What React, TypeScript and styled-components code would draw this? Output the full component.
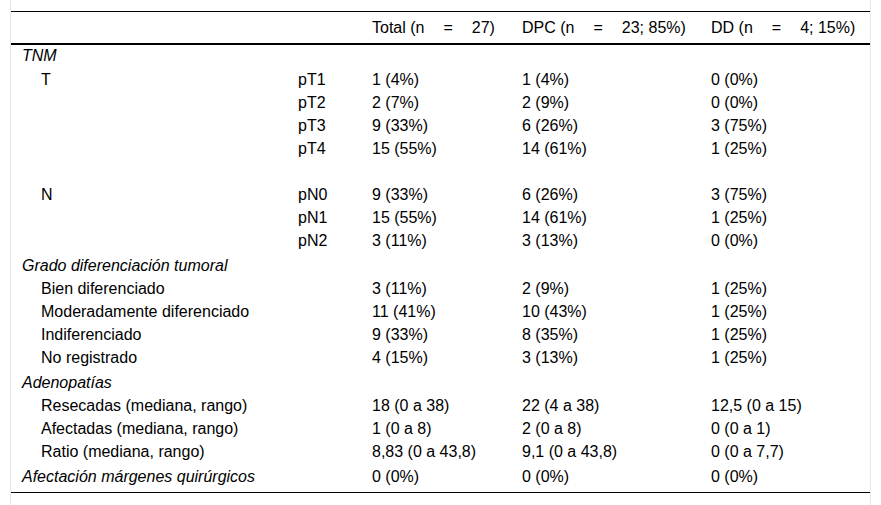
import React from "react";
import styled, { createGlobalStyle, css } from "styled-components";

const Global = createGlobalStyle`
  html, body { margin: 0; padding: 0; background: #fff; }
  body { font-family: "Liberation Sans", Arial, sans-serif; color: #000; }
`;

const Frame = styled.div`
  box-sizing: border-box;
  width: 861px;
  height: 505px;
  margin-left: 10px;
  padding-top: 11px;
  border-left: 1px solid #e8e8e8;
  border-right: 1px solid #e8e8e8;
`;

const Table = styled.table`
  width: 859px;
  table-layout: fixed;
  border-collapse: separate;
  border-spacing: 0;
  font-size: 16px;
  line-height: 19px;
`;

const Col = styled.col<{ $w: number }>`
  width: ${(p) => p.$w}px;
`;

const HeadCell = styled.th`
  text-align: left;
  font-weight: normal;
  padding: 6px 11px;
  border-top: 1px solid #000;
  border-bottom: 2px solid #000;
  white-space: nowrap;
`;

const HeadLabel = styled.span`
  display: inline-flex;
  gap: 19px;
`;

type Pos = "first" | "section" | "plain";

const Cell = styled.td<{ $pos: Pos; $last?: boolean }>`
  height: 19px;
  padding: ${(p) =>
    p.$pos === "first" ? "1px 11px 3px" : p.$pos === "section" ? "4px 11px 2px" : "2px 11px"};
  white-space: nowrap;
  vertical-align: middle;
  font-style: normal;
  ${(p) =>
    p.$last &&
    css`
      padding-bottom: 6px;
      border-bottom: 1px solid #000;
    `}
`;

const LabelCell = styled(Cell)<{ $italic?: boolean; $indent?: boolean }>`
  padding-left: ${(p) => (p.$indent ? "30px" : "11px")};
  font-style: ${(p) => (p.$italic ? "italic" : "normal")};
`;

type Row = { label?: string; sub?: string; vals?: [string, string, string]; section?: boolean };

const rows: Row[] = [
  { label: "TNM", section: true },
  { label: "T", sub: "pT1", vals: ["1 (4%)", "1 (4%)", "0 (0%)"] },
  { sub: "pT2", vals: ["2 (7%)", "2 (9%)", "0 (0%)"] },
  { sub: "pT3", vals: ["9 (33%)", "6 (26%)", "3 (75%)"] },
  { sub: "pT4", vals: ["15 (55%)", "14 (61%)", "1 (25%)"] },
  {},
  { label: "N", sub: "pN0", vals: ["9 (33%)", "6 (26%)", "3 (75%)"] },
  { sub: "pN1", vals: ["15 (55%)", "14 (61%)", "1 (25%)"] },
  { sub: "pN2", vals: ["3 (11%)", "3 (13%)", "0 (0%)"] },
  { label: "Grado diferenciación tumoral", section: true },
  { label: "Bien diferenciado", vals: ["3 (11%)", "2 (9%)", "1 (25%)"] },
  { label: "Moderadamente diferenciado", vals: ["11 (41%)", "10 (43%)", "1 (25%)"] },
  { label: "Indiferenciado", vals: ["9 (33%)", "8 (35%)", "1 (25%)"] },
  { label: "No registrado", vals: ["4 (15%)", "3 (13%)", "1 (25%)"] },
  { label: "Adenopatías", section: true },
  { label: "Resecadas (mediana, rango)", vals: ["18 (0 a 38)", "22 (4 a 38)", "12,5 (0 a 15)"] },
  { label: "Afectadas (mediana, rango)", vals: ["1 (0 a 8)", "2 (0 a 8)", "0 (0 a 1)"] },
  { label: "Ratio (mediana, rango)", vals: ["8,83 (0 a 43,8)", "9,1 (0 a 43,8)", "0 (0 a 7,7)"] },
  { label: "Afectación márgenes quirúrgicos", section: true, vals: ["0 (0%)", "0 (0%)", "0 (0%)"] },
];

const headers: [string, string][] = [
  ["Total (n", "27)"],
  ["DPC (n", "23; 85%)"],
  ["DD (n", "4; 15%)"],
];

const widths = [276, 74, 150, 189, 170];

export default function App() {
  return (
    <>
      <Global />
      <Frame>
        <Table>
          <colgroup>
            {widths.map((w, i) => (
              <Col key={i} $w={w} />
            ))}
          </colgroup>
          <thead>
            <tr>
              <HeadCell />
              <HeadCell />
              {headers.map(([a, b]) => (
                <HeadCell key={a}>
                  <HeadLabel>
                    <span>{a}</span>
                    <span>=</span>
                    <span>{b}</span>
                  </HeadLabel>
                </HeadCell>
              ))}
            </tr>
          </thead>
          <tbody>
            {rows.map((r, i) => {
              const pos: Pos = i === 0 ? "first" : r.section ? "section" : "plain";
              const last = i === rows.length - 1;
              return (
                <tr key={i}>
                  <LabelCell $pos={pos} $last={last} $italic={r.section} $indent={!r.section && !!r.label}>
                    {r.label ?? ""}
                  </LabelCell>
                  <Cell $pos={pos} $last={last}>{r.sub ?? ""}</Cell>
                  {[0, 1, 2].map((k) => (
                    <Cell key={k} $pos={pos} $last={last}>
                      {r.vals ? r.vals[k] : ""}
                    </Cell>
                  ))}
                </tr>
              );
            })}
          </tbody>
        </Table>
      </Frame>
    </>
  );
}
